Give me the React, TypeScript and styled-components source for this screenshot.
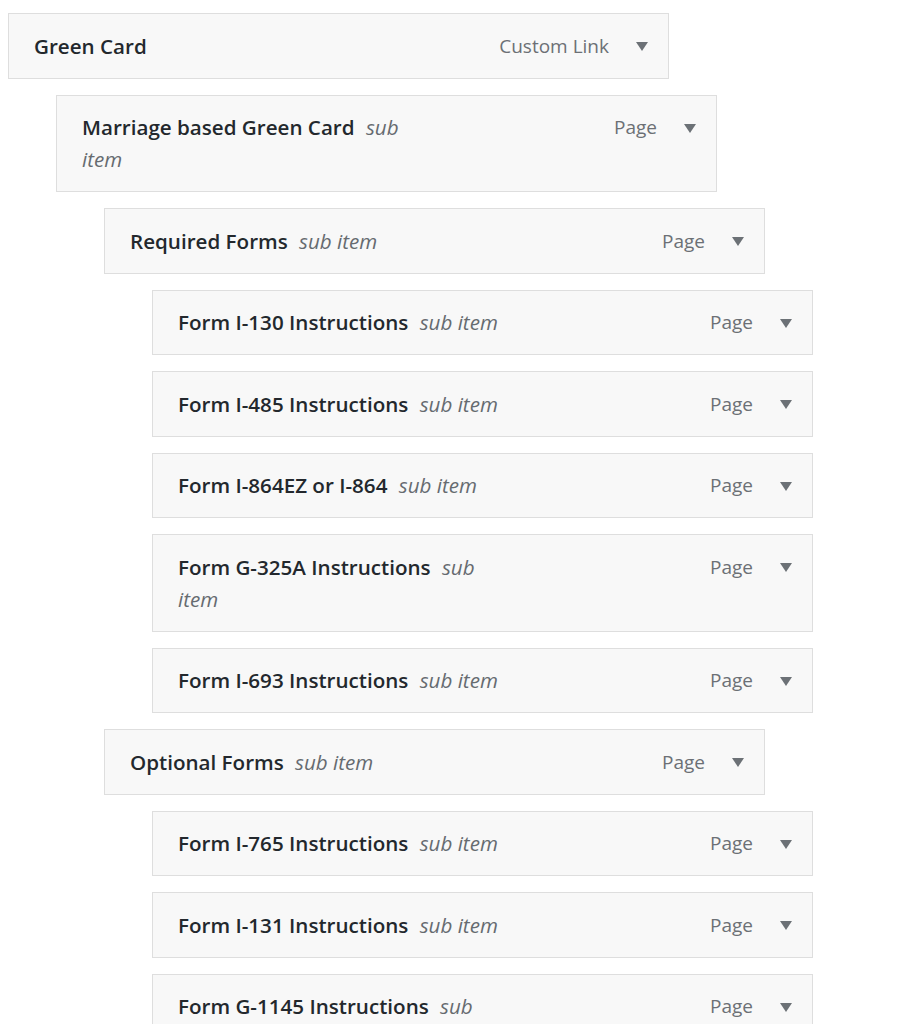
import React from 'react';
import styled, { createGlobalStyle } from 'styled-components';

const GlobalStyle = createGlobalStyle`
    html, body {
        margin: 0;
        padding: 0;
        background: #ffffff;
        overflow: hidden;
    }
    body {
        font-family: "Open Sans", "Noto Sans", sans-serif;
        color: #23282d;
    }
`;

const MenuList = styled.ul`
    list-style: none;
    margin: 0;
    padding: 13px 8px;
    display: flex;
    flex-direction: column;
    gap: 16px;
`;

const MenuItem = styled.li<{ $depth: number }>`
    box-sizing: border-box;
    width: 661px;
    margin-left: ${p => p.$depth * 48}px;
    display: flex;
    align-items: flex-start;
    padding: 15.75px 20px 15.75px 25px;
    background: #f8f8f8;
    border: 1px solid #dedede;
    font-size: 20.6px;
    line-height: 32px;
`;

const ItemTitle = styled.span`
    flex: 0 1 auto;
    max-width: 332px;
    font-weight: 600;
    color: #23282d;
`;

const SubLabel = styled.span`
    margin-left: 6px;
    font-weight: 400;
    font-style: italic;
    color: #666b70;
`;

const ItemControls = styled.span`
    margin-left: auto;
    display: flex;
    align-items: center;
    gap: 27px;
    height: 32px;
`;

const ItemType = styled.span`
    font-size: 19px;
    color: #6c7075;
    white-space: nowrap;
`;

const Arrow = styled.span`
    width: 0;
    height: 0;
    border-left: 6px solid transparent;
    border-right: 6px solid transparent;
    border-top: 9px solid #6c7176;
    margin-top: 2px;
`;

type Entry = { title: string; type: string; depth: number };

const entries: Entry[] = [
    { title: 'Green Card', type: 'Custom Link', depth: 0 },
    { title: 'Marriage based Green Card', type: 'Page', depth: 1 },
    { title: 'Required Forms', type: 'Page', depth: 2 },
    { title: 'Form I-130 Instructions', type: 'Page', depth: 3 },
    { title: 'Form I-485 Instructions', type: 'Page', depth: 3 },
    { title: 'Form I-864EZ or I-864', type: 'Page', depth: 3 },
    { title: 'Form G-325A Instructions', type: 'Page', depth: 3 },
    { title: 'Form I-693 Instructions', type: 'Page', depth: 3 },
    { title: 'Optional Forms', type: 'Page', depth: 2 },
    { title: 'Form I-765 Instructions', type: 'Page', depth: 3 },
    { title: 'Form I-131 Instructions', type: 'Page', depth: 3 },
    { title: 'Form G-1145 Instructions', type: 'Page', depth: 3 },
];

const App = () => {
    return (
        <>
            <GlobalStyle />
            <MenuList>
                {entries.map(e => (
                    <MenuItem key={e.title} $depth={e.depth}>
                        <ItemTitle>
                            {e.title}
                            {e.depth > 0 && <> <SubLabel>sub item</SubLabel></>}
                        </ItemTitle>
                        <ItemControls>
                            <ItemType>{e.type}</ItemType>
                            <Arrow />
                        </ItemControls>
                    </MenuItem>
                ))}
            </MenuList>
        </>
    );
};

export default App;
